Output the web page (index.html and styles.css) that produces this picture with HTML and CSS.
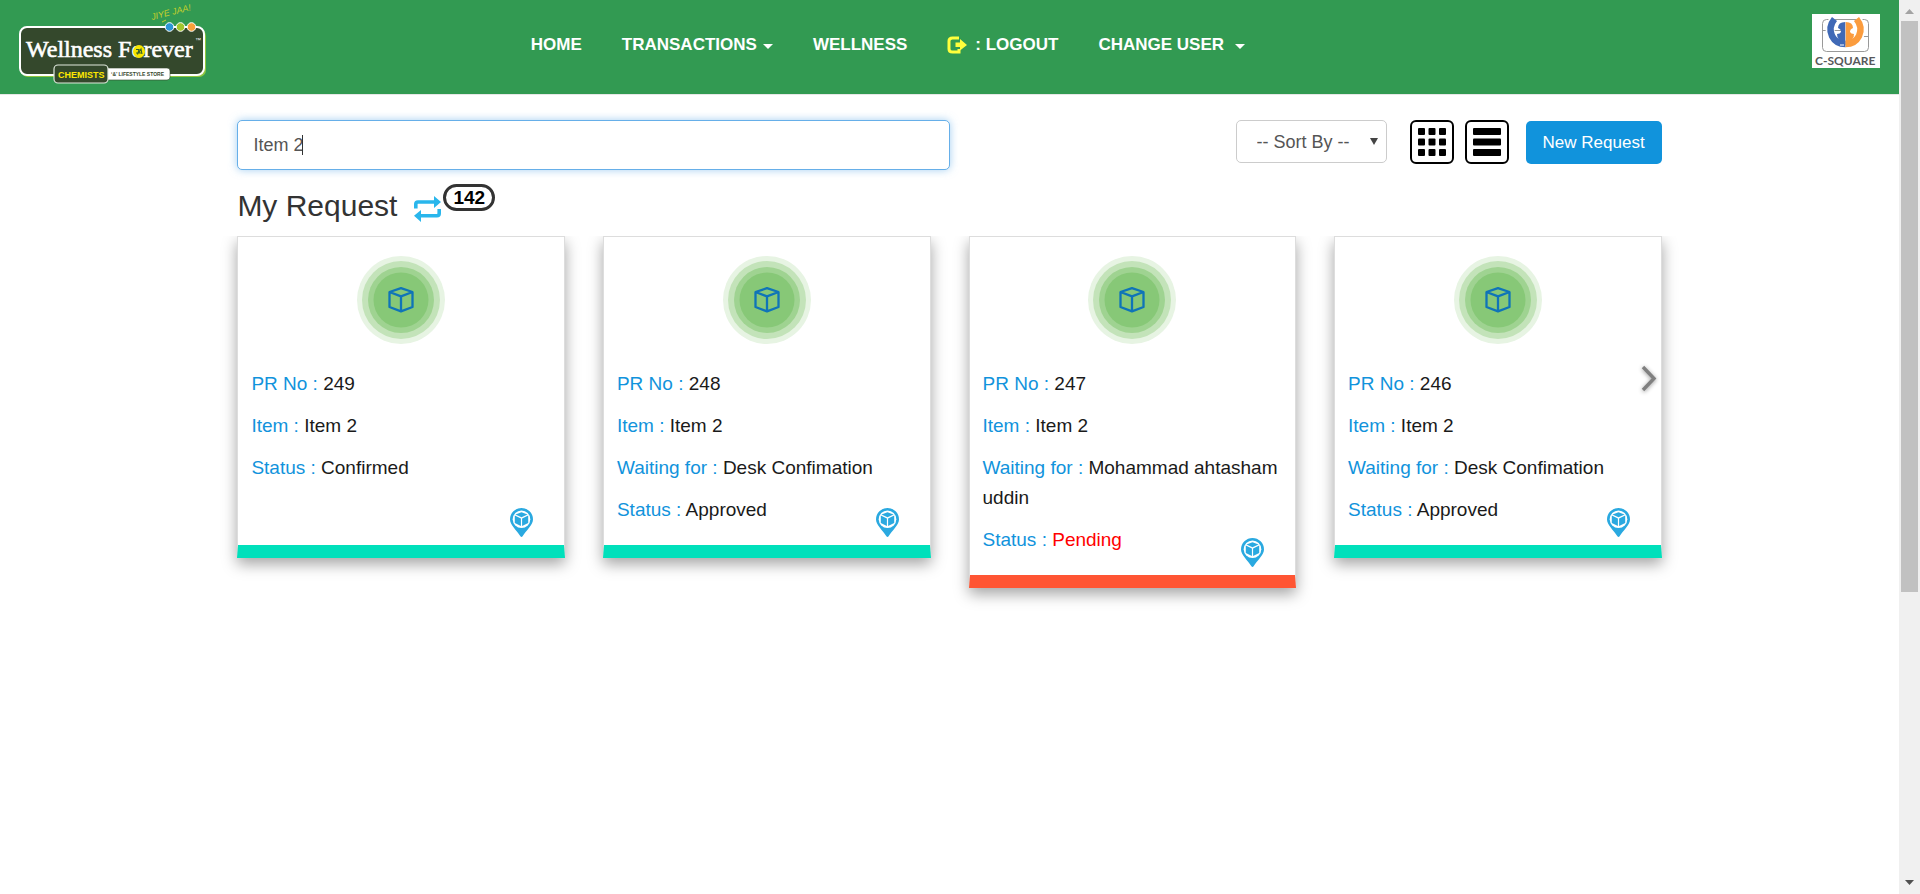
FILE: index.html
```html
<!DOCTYPE html>
<html lang="en">
<head>
<meta charset="utf-8">
<title>My Request</title>
<link rel="stylesheet" href="styles.css">
</head>
<body>
<svg class="defs" aria-hidden="true">
  <symbol id="badge-box" viewBox="0 0 88 88">
    <circle cx="44" cy="44" r="44" fill="#e7f4e3"/>
    <circle cx="44" cy="44" r="39" fill="#c3e3b9"/>
    <circle cx="44" cy="44" r="33" fill="#9fd391"/>
    <circle cx="44" cy="44" r="27.500" fill="#87c877"/>
    <path d="M44 32.200 55.500 36V51L44 55.300 32.500 51V36ZM32.500 36 44 40.300 55.500 36M44 40.300V55.300" fill="none" stroke="#0f74b8" stroke-width="2.300" stroke-linejoin="round"/>
  </symbol>
  <symbol id="pin" viewBox="0 0 23 29">
    <path d="M11.500 0A11.500 11.500 0 0 1 23 11.500C23 17 16.500 22 12.600 28.300Q11.500 29.700 10.400 28.300C6.500 22 0 17 0 11.500A11.500 11.500 0 0 1 11.500 0Z" fill="#2aa9e0"/>
    <circle cx="11.500" cy="11.200" r="8.800" fill="#fff"/>
    <path d="M11.500 4.300 17.500 6.500 11.500 9.200 5.500 6.500ZM4.800 7.600 10.900 10.500V18L4.800 15ZM18.200 7.600 12.100 10.500V18L18.200 15Z" fill="#2aa9e0"/>
  </symbol>
</svg>

<div class="window">
<div class="page">
  <header class="topbar">
    <a class="brand" href="#" aria-label="Wellness Forever">
      <svg width="188" height="82" viewBox="0 0 188 82">
        <rect x="2" y="27" width="185" height="48" rx="7" fill="#8fc63f"/>
        <rect x="1" y="25" width="184" height="48" rx="7" fill="#34482c" stroke="#fff" stroke-width="2"/>
        <text class="logo-main" x="7" y="55">Wellness Forever</text>
        <ellipse cx="120" cy="49.500" rx="6" ry="6.500" fill="#f7e600"/>
        <path d="M117 47.500h3l-1.500 5M120 50.500l2-3.500 1 5M117 51h6" stroke="#34602c" stroke-width="1.100" fill="none"/>
        <text class="logo-tm" x="176" y="40">™</text>
        <circle cx="150.500" cy="25" r="4.300" fill="#2b96d6" stroke="#fff"/>
        <circle cx="161.500" cy="25" r="4.300" fill="#a2c62c" stroke="#fff"/>
        <circle cx="172.500" cy="25" r="4.300" fill="#f9a13a" stroke="#fff"/>
        <text class="logo-jiye" x="133" y="18" transform="rotate(-14 133 18)">JIYE JAA!</text>
        <path d="M143 20 147 18" stroke="#c5cf2c"/>
        <rect x="86" y="66" width="65" height="12" rx="3" fill="#fff" stroke="#34482c" stroke-width="0.600"/>
        <rect x="35" y="63" width="54" height="18" rx="4" fill="#34482c" stroke="#dfe8dc" stroke-width="1.200"/>
        <text class="logo-chem" x="39" y="76">CHEMISTS</text>
        <text class="logo-store" x="92" y="74">‘&amp;’ LIFESTYLE STORE</text>
      </svg>
    </a>
    <nav class="nav">
      <a href="#">HOME</a>
      <a href="#">TRANSACTIONS<span class="caret"></span></a>
      <a href="#">WELLNESS</a>
      <a href="#">
        <svg class="logout" width="20" height="18" viewBox="0 0 20 18"><path d="M12 2H5.500Q2 2 2 5V13Q2 16 5.500 16H12V13" fill="none" stroke="#ffff3c" stroke-width="3"/><path d="M8.500 6.500H13V3L20 9 13 14.500V11H8.500Z" fill="#ffff3c"/></svg>: LOGOUT</a>
      <a href="#">CHANGE USER<span class="caret caret-wide"></span></a>
    </nav>
    <a class="partner" href="#" aria-label="C-Square">
      <svg width="68" height="54" viewBox="0 0 68 54">
        <rect width="68" height="54" fill="#fff"/>
        <rect x="10.500" y="5.500" width="46" height="32" rx="4" fill="none" stroke="#999"/>
        <path d="M10 16.500H30M36 22.500H57" stroke="#999"/>
        <path d="M22 5Q15.500 13 19.500 22 24 30 33.500 30" fill="none" stroke="#fff" stroke-width="9"/>
        <path d="M45 5Q51.500 13 47.500 22 43 30 33.500 30" fill="none" stroke="#fff" stroke-width="9"/>
        <path d="M22.500 5Q16 13 20 22 24 30 33.500 30" fill="none" stroke="#4069b6" stroke-width="6.500"/>
        <path d="M44.500 5Q51 13 47 22 43 30 33.500 30" fill="none" stroke="#fb9c3e" stroke-width="6.500"/>
        <path d="M33.300 8Q26 8 26 14 29 15 29 18 28 20 25 20 25 27 33.300 31Z" fill="#4069b6"/>
        <path d="M33.700 8Q41 8 41 14 38 15 38 18 39 20 42 20 42 27 33.700 31Z" fill="#fb9c3e"/>
        <path d="M28 31H32" stroke="#fff"/>
        <text class="partner-text" x="3" y="51">C-SQUARE</text>
      </svg>
    </a>
  </header>

  <main class="content">
    <div class="toolbar">
      <div class="search">
        <input type="text" value="Item 2" aria-label="Search requests">
      </div>
      <div class="actions">
        <div class="sort">
          <select aria-label="Sort by"><option>-- Sort By --</option></select>
        </div>
        <div class="views">
          <button class="view" type="button" aria-label="Grid view">
            <svg width="44" height="44" viewBox="0 0 44 44"><rect x="1" y="1" width="42" height="42" rx="5" fill="#fff" stroke="#000" stroke-width="2"/><g fill="#000"><rect x="8" y="8" width="7" height="7" rx="1"/><rect x="18.500" y="8" width="7" height="7" rx="1"/><rect x="29" y="8" width="7" height="7" rx="1"/><rect x="8" y="18.500" width="7" height="7" rx="1"/><rect x="18.500" y="18.500" width="7" height="7" rx="1"/><rect x="29" y="18.500" width="7" height="7" rx="1"/><rect x="8" y="29" width="7" height="7" rx="1"/><rect x="18.500" y="29" width="7" height="7" rx="1"/><rect x="29" y="29" width="7" height="7" rx="1"/></g></svg>
          </button>
          <button class="view" type="button" aria-label="List view">
            <svg width="44" height="44" viewBox="0 0 44 44"><rect x="1" y="1" width="42" height="42" rx="5" fill="#fff" stroke="#000" stroke-width="2"/><g fill="#000"><rect x="8" y="8" width="28" height="7" rx="1"/><rect x="8" y="18.500" width="28" height="7" rx="1"/><rect x="8" y="29" width="28" height="7" rx="1"/></g></svg>
          </button>
        </div>
        <button class="new" type="button">New Request</button>
      </div>
    </div>

    <div class="title">
      <h1>My Request</h1>
      <button class="refresh" type="button" aria-label="Refresh">
        <svg width="27" height="26" viewBox="0 0 27 26"><path d="M1.800 12.500V8Q1.800 6 4 6H21M25.200 13V17.500Q25.200 19.700 23 19.700H6" fill="none" stroke="#29b6ec" stroke-width="3.600"/><path d="M20 0 27 6 20 12ZM7 14V26L0 19.700Z" fill="#29b6ec"/></svg>
      </button>
      <span class="count">142</span>
    </div>

    <section class="cards">
      <article class="card">
        <svg class="emblem"><use href="#badge-box"/></svg>
        <p><span>PR No :</span> 249</p>
        <p><span>Item :</span> Item 2</p>
        <p><span>Status :</span> Confirmed</p>
        <svg class="pin"><use href="#pin"/></svg>
      </article>
      <article class="card">
        <svg class="emblem"><use href="#badge-box"/></svg>
        <p><span>PR No :</span> 248</p>
        <p><span>Item :</span> Item 2</p>
        <p><span>Waiting for :</span> Desk Confimation</p>
        <p><span>Status :</span> Approved</p>
        <svg class="pin"><use href="#pin"/></svg>
      </article>
      <article class="card card-pending">
        <svg class="emblem"><use href="#badge-box"/></svg>
        <p><span>PR No :</span> 247</p>
        <p><span>Item :</span> Item 2</p>
        <p><span>Waiting for :</span> Mohammad ahtasham uddin</p>
        <p><span>Status :</span> <b>Pending</b></p>
        <svg class="pin"><use href="#pin"/></svg>
      </article>
      <article class="card">
        <svg class="emblem"><use href="#badge-box"/></svg>
        <p><span>PR No :</span> 246</p>
        <p><span>Item :</span> Item 2</p>
        <p><span>Waiting for :</span> Desk Confimation</p>
        <p><span>Status :</span> Approved</p>
        <svg class="pin"><use href="#pin"/></svg>
      </article>
      <button class="next" type="button" aria-label="Next">
        <svg width="16" height="27" viewBox="0 0 16 27"><path d="M2 2 13 13.500 2 25" fill="none" stroke="#808080" stroke-width="3.400"/></svg>
      </button>
    </section>
  </main>
</div>
<div class="scrollbar" aria-hidden="true">
  <svg width="21" height="21"><path d="M6 14 10.500 9 15 14Z" fill="#a3a3a3"/></svg>
  <div class="track"><div class="thumb"></div></div>
  <svg width="21" height="21"><path d="M6 7H15L10.500 12Z" fill="#505050"/></svg>
</div>
</div>
</body>
</html>
```
FILE: styles.css
```css
* { box-sizing: border-box; }

body {
  margin: 0;
  background: #fff;
  color: #1a1a1a;
  font-family: "Liberation Sans", Arial, sans-serif;
  font-size: 18px;
}

button { padding: 0; border: 0; background: none; font: inherit; cursor: pointer; }
svg { display: block; }
.defs { position: absolute; width: 0; height: 0; }

.window { display: flex; min-height: 100vh; }
.page { flex: 1; min-width: 0; }

.topbar {
  display: flex;
  align-items: flex-start;
  padding: 2px 19px 0;
  height: 95px;
  background: #329a52;
  border-bottom: 1px solid #e7e7e7;
}
.nav {
  display: flex;
  gap: 40px;
  margin-left: 17.4%;
  padding-top: 32px;
}
.nav a {
  display: flex;
  align-items: center;
  color: #fff;
  font-size: 17px;
  font-weight: bold;
  line-height: 22px;
  text-decoration: none;
  white-space: nowrap;
}
.caret {
  margin: 3px 0 0 6px;
  border: 5px solid transparent;
  border-top-color: #fff;
  border-bottom: 0;
}
.caret-wide { margin-left: 11px; }
.logout { margin-right: 8px; }
.partner { margin: 12px 0 0 auto; }

.logo-main { font: 24px "Liberation Serif", serif; fill: #fff; stroke: #fff; stroke-width: 0.6px; }
.logo-tm { font: 6px "Liberation Sans", sans-serif; fill: #fff; }
.logo-jiye { font: italic 9px "Liberation Sans", sans-serif; fill: #c5cf2c; }
.logo-chem { font: bold 9px "Liberation Sans", sans-serif; fill: #ffe800; }
.logo-store { font: bold 5px "Liberation Sans", sans-serif; fill: #34482c; }
.partner-text { font: bold 12px Lato, sans-serif; fill: #58595b; }

.content { width: 75%; margin: 0 auto; padding-top: 25px; }

.toolbar { display: flex; justify-content: space-between; align-items: flex-start; }
.search { position: relative; width: 50%; }
.search input {
  display: block;
  width: 100%;
  height: 50px;
  padding: 0 15px;
  border: 1px solid #66afe9;
  border-radius: 5px;
  outline: 0;
  box-shadow: 0 0 8px rgba(102, 175, 233, .6);
  color: #555;
  font: inherit;
}
/* Insertion point of the active field */
.search::after {
  content: "";
  position: absolute;
  top: 15px;
  left: 65px;
  width: 1px;
  height: 20px;
  background: #333;
}
.actions { display: flex; align-items: flex-end; }
.sort { position: relative; align-self: flex-start; margin-right: 23px; }
.sort select {
  width: 151px;
  height: 43px;
  padding: 0 20px;
  border: 1px solid #ccc;
  border-radius: 5px;
  background: #fff;
  color: #555;
  font: inherit;
  appearance: none;
}
.sort::after {
  content: "";
  position: absolute;
  top: 18px;
  right: 9px;
  border: 4px solid transparent;
  border-top: 7px solid #444;
  border-bottom: 0;
  pointer-events: none;
}
.views { display: flex; gap: 11px; margin-right: 17px; }
.new {
  height: 43px;
  padding: 0 17px;
  border-radius: 5px;
  background: #1193dc;
  color: #fff;
  font-size: 17px;
}

.title { display: flex; align-items: flex-start; height: 66px; padding-top: 14px; }
h1 { margin: 5px 17px 0 0; color: #333; font-size: 30px; font-weight: normal; line-height: 34px; }
.refresh { margin: 12px 2px 0 0; }
.count {
  padding: 0 7px;
  border: 3px solid #333;
  border-radius: 14px;
  color: #000;
  font-size: 19px;
  font-weight: bold;
  line-height: 21px;
}

.cards {
  position: relative;
  display: grid;
  grid-template-columns: repeat(4, 1fr);
  align-items: start;
  gap: 38px;
}
.card {
  position: relative;
  display: flex;
  flex-direction: column;
  gap: 12px;
  min-height: 322px;
  padding: 19px 13px 20px;
  border: 1px solid #ddd;
  border-bottom: 13px solid #00e0bb;
  box-shadow: 0 6px 14px rgba(0, 0, 0, .36);
  clip-path: inset(0 -30px -30px);
  background: #fff;
}
.card-pending { border-bottom-color: #ff5533; }
.emblem { width: 88px; height: 88px; margin: 0 auto 13px; }
.card p { margin: 0; font-size: 19px; line-height: 30px; }
.card span { color: #1193dc; }
.card b { color: #f00; font-weight: normal; }
.pin { position: absolute; right: 31px; bottom: 8px; width: 23px; height: 29px; }
.next { position: absolute; top: 129px; right: 5px; filter: drop-shadow(0 1px 2px rgba(0, 0, 0, .4)); }

.scrollbar { display: flex; flex-direction: column; width: 21px; background: #f0f0f0; }
.track { flex: 1; padding: 0 2px; }
.thumb { height: 67%; background: #c1c1c1; }
```
